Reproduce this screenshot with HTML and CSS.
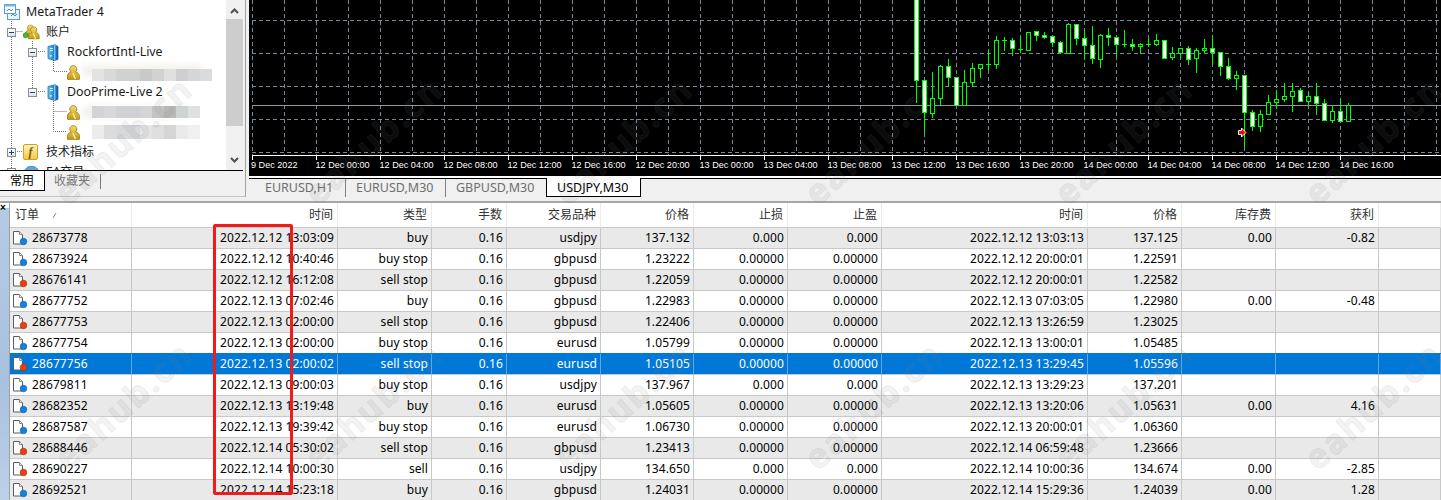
FILE: index.html
```html
<!DOCTYPE html>
<html lang="zh">
<head>
<meta charset="utf-8">
<title>MetaTrader 4</title>
<link rel="stylesheet" href="styles.css">
</head>
<body>
<svg class="defs" width="0" height="0" aria-hidden="true">
  <defs>
    <linearGradient id="gold" x1="0" y1="0" x2="0" y2="1"><stop offset="0" stop-color="#f6dc6a"/><stop offset="1" stop-color="#c79a12"/></linearGradient>
    <linearGradient id="tower" x1="0" y1="0" x2="1" y2="0"><stop offset="0" stop-color="#7cc8f4"/><stop offset=".5" stop-color="#1f8fe0"/><stop offset="1" stop-color="#0f5fae"/></linearGradient>
    <symbol id="doc-page" viewBox="0 0 16 16">
      <path d="M1.5 1.5h6l3 3v9.5h-9z" fill="#fff" stroke="#5c5c5c"/>
      <path d="M7.5 1.5v3h3" fill="#e8e8e8" stroke="#8a8a8a"/>
    </symbol>
    <symbol id="person" viewBox="0 0 14 16">
      <path d="M.6 15.400v-3.900c0-2.500 2.200-3.500 3.800-4C3.300 6.500 3 5.300 3 4.200 3 2.200 4.700.6 6.800.6s3.800 1.600 3.800 3.600c0 1.100-.4 2.300-1.400 3.300 1.600.5 4.200 1.500 4.200 4v3.900z" fill="url(#gold)" stroke="#8c6b06" stroke-width=".8"/>
      <path d="M6.500 8.500 9 15" stroke="#fff3b0" stroke-width="1.400" fill="none"/>
    </symbol>
    <symbol id="server" viewBox="0 0 12 17">
      <path d="M1 2.500 8 .8l3 1.700v12.800L8 16.500l-7-2z" fill="url(#tower)" stroke="#0f5c9e" stroke-width=".7"/>
      <path d="M7.800 1v15.400" stroke="#d7f0ff" stroke-width=".8"/>
      <path d="M3 4.500h3M3 6.500h3" stroke="#e6f6ff" stroke-width=".9"/>
      <rect x="3" y="11" width="1.600" height="1.600" fill="#ffe680"/>
    </symbol>
  </defs>
</svg>

<div class="top">
  <aside class="navigator">
    <div class="nav-body">
      <div class="tree">
        <svg class="connectors" width="226" height="170" viewBox="0 0 226 170" aria-hidden="true">
          <path d="M11.500 17V170M11.500 31.500H23M15 151.500H23M32.500 41V88M36 51.500H46M36 91.500H46M53.500 60V71.500H67M53.500 99V131.500H67M53.500 111.500H67" fill="none" stroke="#777" stroke-dasharray="1 1"/>
        </svg>
        <div class="tree-row root">
          <svg class="ico-app" viewBox="0 0 16 16" aria-hidden="true"><rect x="3.500" y="5.500" width="12" height="10" fill="#eaf4ff" stroke="#5b9ad6"/><rect x=".5" y=".5" width="11" height="9" fill="#fff" stroke="#5b9ad6"/><rect x=".5" y=".5" width="11" height="2" fill="#7db4e6"/><path d="M3 7 5 5l2 2 2-2M7 12l2-2 2 2 2-2" fill="none" stroke="#3f86c8"/></svg>
          <span class="label">MetaTrader 4</span>
        </div>
        <div class="tree-row lvl1">
          <span class="toggle minus"></span>
          <svg class="ico-accounts" viewBox="0 0 18 16" aria-hidden="true"><use href="#person" x="2" y="0" width="12" height="13"/><circle cx="2.800" cy="11.500" r="2.700" fill="#3fbf2f" stroke="#1f8a1a" stroke-width=".6"/><use href="#person" x="5" y="2" width="13" height="14"/></svg>
          <span class="label">账户</span>
        </div>
        <div class="tree-row lvl2">
          <span class="toggle minus"></span>
          <svg class="ico-server" aria-hidden="true"><use href="#server"/></svg>
          <span class="label">RockfortIntl-Live</span>
        </div>
        <div class="tree-row lvl3">
          <svg class="ico-person" aria-hidden="true"><use href="#person"/></svg>
          <span class="mosaic m1"></span>
        </div>
        <div class="tree-row lvl2">
          <span class="toggle minus"></span>
          <svg class="ico-server" aria-hidden="true"><use href="#server"/></svg>
          <span class="label">DooPrime-Live 2</span>
        </div>
        <div class="tree-row lvl3">
          <svg class="ico-person" aria-hidden="true"><use href="#person"/></svg>
          <span class="mosaic m2"></span>
        </div>
        <div class="tree-row lvl3">
          <svg class="ico-person" aria-hidden="true"><use href="#person"/></svg>
          <span class="mosaic m3"></span>
        </div>
        <div class="tree-row lvl1">
          <span class="toggle plus"></span>
          <span class="ico-func">f</span>
          <span class="label">技术指标</span>
        </div>
        <div class="tree-row lvl1">
          <span class="toggle plus"></span>
          <svg class="ico-accounts" viewBox="0 0 18 16" aria-hidden="true"><path d="M1 9c1-5 4-7 8-7s7 2 8 7c-2 3-14 3-16 0z" fill="#5aa7dc" stroke="#2b77b2" stroke-width=".7"/></svg>
          <span class="label">EA交易</span>
        </div>
      </div>
      <div class="scrollbar">
        <svg class="sb-btn" viewBox="0 0 17 19" aria-hidden="true"><path d="M5 13l3.500-3.500L12 13" fill="none" stroke="#505050" stroke-width="2"/></svg>
        <div class="sb-thumb"></div>
        <div class="sb-track"></div>
        <svg class="sb-btn" viewBox="0 0 17 19" aria-hidden="true"><path d="M5 7l3.500 3.500L12 7" fill="none" stroke="#505050" stroke-width="2"/></svg>
      </div>
    </div>
    <div class="nav-tabs">
      <span class="nav-tab active">常用</span>
      <span class="nav-tab">收藏夹</span>
    </div>
  </aside>

  <section class="workspace">
    <svg class="chart" width="1192" height="176" viewBox="249 0 1192 176" role="img" aria-label="USDJPY,M30">
      <defs>
        <pattern id="vgrid" x="252" y="0" width="32" height="176" patternUnits="userSpaceOnUse">
          <line x1=".5" y1="0" x2=".5" y2="155" stroke="#778899" stroke-dasharray="4 3"/>
        </pattern>
        <pattern id="ticks" x="252" y="155" width="64" height="6" patternUnits="userSpaceOnUse">
          <line x1=".5" y1="0" x2=".5" y2="5" stroke="#fff"/>
        </pattern>
      </defs>
      <rect x="249" y="0" width="1192" height="176" fill="#000"/>
      <rect x="252" y="0" width="1189" height="155" fill="url(#vgrid)"/>
      <path d="M252 20.500H1441M252 53.500H1441M252 86.500H1441M252 119.500H1441M252 152.500H1441" stroke="#778899" stroke-dasharray="4 3"/>
      <path d="M252 105.500H1441" stroke="#8f98a3"/>
      <path d="M252 155.500H1441" stroke="#fff"/>
      <rect x="252" y="155" width="1189" height="6" fill="url(#ticks)"/>

      <path class="wicks" d="M916.500 0V103M924.500 80V133M932.500 72V118M940.500 65V105M948.500 59V87M956.500 77V105M964.500 70V105M972.500 63V87M980.500 64V78M988.500 50V70M996.500 36V69M1004.500 37V51M1012.500 38V56M1020.500 37V53M1028.500 32V50M1036.500 31V41M1044.500 32V39M1052.500 35V47M1060.500 41V53M1068.500 23V53M1076.500 24V45M1084.500 30V59M1092.500 26V64M1100.500 34V68M1108.500 28V46M1116.500 37V57M1124.500 30V47M1132.500 39V51M1140.500 43V54M1148.500 38V47M1156.500 34V46M1164.500 40V59M1172.500 47V60M1180.500 48V60M1188.500 46V65M1196.500 48V73M1204.500 39V53M1212.500 35V65M1220.500 52V76M1228.500 58V80M1236.500 71V90M1244.500 75V148M1252.500 110V131M1260.500 110V132M1268.500 95V115M1276.500 90V108M1284.500 83V102M1292.500 83V112M1300.500 88V102M1308.500 92V107M1316.500 83V115M1324.500 99V121M1332.500 106V123M1340.500 99V122M1348.500 103V122"/>
      <path class="wicks" d="M986 64.500h5M1002 40.500h5M1018 49.500h5M1122 44.500h5M1146 44.500h5"/>
      <g class="bear">
        <rect x="914.500" y="-1" width="4" height="81.500"/><rect x="922.500" y="80.500" width="4" height="32"/><rect x="946.500" y="66.500" width="4" height="11"/><rect x="954.500" y="77.500" width="4" height="28"/><rect x="1010.500" y="40.500" width="4" height="8"/><rect x="1034.500" y="31.500" width="4" height="4"/><rect x="1042.500" y="35.500" width="4" height="2"/><rect x="1050.500" y="36.500" width="4" height="6"/><rect x="1058.500" y="42.500" width="4" height="10"/><rect x="1074.500" y="24.500" width="4" height="14"/><rect x="1082.500" y="38.500" width="4" height="7"/><rect x="1090.500" y="45.500" width="4" height="13"/><rect x="1106.500" y="35.500" width="4" height="2"/><rect x="1114.500" y="37.500" width="4" height="7"/><rect x="1130.500" y="44.500" width="4" height="2"/><rect x="1162.500" y="40.500" width="4" height="18"/><rect x="1186.500" y="48.500" width="4" height="11"/><rect x="1210.500" y="48.500" width="4" height="4"/><rect x="1218.500" y="52.500" width="4" height="14"/><rect x="1226.500" y="66.500" width="4" height="12"/><rect x="1242.500" y="75.500" width="4" height="37"/><rect x="1250.500" y="112.500" width="4" height="14"/><rect x="1298.500" y="90.500" width="4" height="11"/><rect x="1314.500" y="96.500" width="4" height="7"/><rect x="1322.500" y="103.500" width="4" height="17"/><rect x="1338.500" y="111.500" width="4" height="10"/>
      </g>
      <g class="bull">
        <rect x="930.500" y="98.500" width="4" height="15"/><rect x="938.500" y="66.500" width="4" height="32"/><rect x="962.500" y="82.500" width="4" height="23"/><rect x="970.500" y="68.500" width="4" height="14"/><rect x="978.500" y="64.500" width="4" height="4"/><rect x="994.500" y="40.500" width="4" height="24"/><rect x="1026.500" y="32.500" width="4" height="18"/><rect x="1066.500" y="24.500" width="4" height="29"/><rect x="1098.500" y="35.500" width="4" height="24"/><rect x="1138.500" y="44.500" width="4" height="2"/><rect x="1154.500" y="40.500" width="4" height="4"/><rect x="1170.500" y="53.500" width="4" height="4"/><rect x="1178.500" y="48.500" width="4" height="5"/><rect x="1194.500" y="50.500" width="4" height="8"/><rect x="1202.500" y="48.500" width="4" height="2"/><rect x="1234.500" y="75.500" width="4" height="3"/><rect x="1258.500" y="114.500" width="4" height="12"/><rect x="1266.500" y="102.500" width="4" height="12"/><rect x="1274.500" y="99.500" width="4" height="3"/><rect x="1282.500" y="96.500" width="4" height="3"/><rect x="1290.500" y="91.500" width="4" height="5"/><rect x="1306.500" y="96.500" width="4" height="5"/><rect x="1330.500" y="111.500" width="4" height="9"/><rect x="1346.500" y="105.500" width="4" height="16"/>
      </g>
      <path d="M1238.500 130.500h3v-2.500l4.500 4.500-4.500 4.500v-2.500h-3z" fill="#f00" stroke="#fff"/>

      <g class="axis-labels">
        <text x="251" y="167.500">9 Dec 2022</text>
        <text x="315.500" y="167.500">12 Dec 00:00</text>
        <text x="379.500" y="167.500">12 Dec 04:00</text>
        <text x="443.500" y="167.500">12 Dec 08:00</text>
        <text x="507.500" y="167.500">12 Dec 12:00</text>
        <text x="571.500" y="167.500">12 Dec 16:00</text>
        <text x="635.500" y="167.500">12 Dec 20:00</text>
        <text x="699.500" y="167.500">13 Dec 00:00</text>
        <text x="763.500" y="167.500">13 Dec 04:00</text>
        <text x="827.500" y="167.500">13 Dec 08:00</text>
        <text x="891.500" y="167.500">13 Dec 12:00</text>
        <text x="955.500" y="167.500">13 Dec 16:00</text>
        <text x="1019.500" y="167.500">13 Dec 20:00</text>
        <text x="1083.500" y="167.500">14 Dec 00:00</text>
        <text x="1147.500" y="167.500">14 Dec 04:00</text>
        <text x="1211.500" y="167.500">14 Dec 08:00</text>
        <text x="1275.500" y="167.500">14 Dec 12:00</text>
        <text x="1339.500" y="167.500">14 Dec 16:00</text>
      </g>
    </svg>
    <div class="chart-tabs">
      <span class="chart-tab t1">EURUSD,H1</span>
      <span class="chart-tab t2">EURUSD,M30</span>
      <span class="chart-tab t3">GBPUSD,M30</span>
      <span class="chart-tab active">USDJPY,M30</span>
    </div>
  </section>
</div>

<div class="orders">
  <div class="dock"><span class="dock-close">×</span></div>
  <table class="order-table">
    <colgroup>
      <col class="c-order"><col class="c-time"><col class="c-type"><col class="c-lots"><col class="c-std"><col class="c-std2"><col class="c-std"><col class="c-std"><col class="c-time"><col class="c-std"><col class="c-std"><col class="c-profit"><col class="c-rest">
    </colgroup>
    <thead>
      <tr>
        <th class="first">订单<svg class="sort" viewBox="0 0 6 8" aria-hidden="true"><path d="M1 7 4 2" stroke="#888" fill="none"/></svg></th>
        <th>时间</th><th>类型</th><th>手数</th><th>交易品种</th><th>价格</th><th>止损</th><th>止盈</th><th>时间</th><th>价格</th><th>库存费</th><th>获利</th><th></th>
      </tr>
    </thead>
    <tbody>
      <tr class="alt"><td class="first"><svg class="order-ico buy" aria-hidden="true"><use href="#doc-page"/><circle cx="11.500" cy="11.500" r="3.300"/></svg>28673778</td><td>2022.12.12 13:03:09</td><td>buy</td><td>0.16</td><td>usdjpy</td><td>137.132</td><td>0.000</td><td>0.000</td><td>2022.12.12 13:03:13</td><td>137.125</td><td>0.00</td><td>-0.82</td><td></td></tr>
      <tr><td class="first"><svg class="order-ico buy" aria-hidden="true"><use href="#doc-page"/><circle cx="11.500" cy="11.500" r="3.300"/></svg>28673924</td><td>2022.12.12 10:40:46</td><td>buy stop</td><td>0.16</td><td>gbpusd</td><td>1.23222</td><td>0.00000</td><td>0.00000</td><td>2022.12.12 20:00:01</td><td>1.22591</td><td></td><td></td><td></td></tr>
      <tr class="alt"><td class="first"><svg class="order-ico sell" aria-hidden="true"><use href="#doc-page"/><circle cx="11.500" cy="11.500" r="3.300"/></svg>28676141</td><td>2022.12.12 16:12:08</td><td>sell stop</td><td>0.16</td><td>gbpusd</td><td>1.22059</td><td>0.00000</td><td>0.00000</td><td>2022.12.12 20:00:01</td><td>1.22582</td><td></td><td></td><td></td></tr>
      <tr><td class="first"><svg class="order-ico buy" aria-hidden="true"><use href="#doc-page"/><circle cx="11.500" cy="11.500" r="3.300"/></svg>28677752</td><td>2022.12.13 07:02:46</td><td>buy</td><td>0.16</td><td>gbpusd</td><td>1.22983</td><td>0.00000</td><td>0.00000</td><td>2022.12.13 07:03:05</td><td>1.22980</td><td>0.00</td><td>-0.48</td><td></td></tr>
      <tr class="alt"><td class="first"><svg class="order-ico sell" aria-hidden="true"><use href="#doc-page"/><circle cx="11.500" cy="11.500" r="3.300"/></svg>28677753</td><td>2022.12.13 02:00:00</td><td>sell stop</td><td>0.16</td><td>gbpusd</td><td>1.22406</td><td>0.00000</td><td>0.00000</td><td>2022.12.13 13:26:59</td><td>1.23025</td><td></td><td></td><td></td></tr>
      <tr><td class="first"><svg class="order-ico buy" aria-hidden="true"><use href="#doc-page"/><circle cx="11.500" cy="11.500" r="3.300"/></svg>28677754</td><td>2022.12.13 02:00:00</td><td>buy stop</td><td>0.16</td><td>eurusd</td><td>1.05799</td><td>0.00000</td><td>0.00000</td><td>2022.12.13 13:00:01</td><td>1.05485</td><td></td><td></td><td></td></tr>
      <tr class="selected"><td class="first"><svg class="order-ico sell" aria-hidden="true"><use href="#doc-page"/><circle cx="11.500" cy="11.500" r="3.300"/></svg>28677756</td><td>2022.12.13 02:00:02</td><td>sell stop</td><td>0.16</td><td>eurusd</td><td>1.05105</td><td>0.00000</td><td>0.00000</td><td>2022.12.13 13:29:45</td><td>1.05596</td><td></td><td></td><td></td></tr>
      <tr><td class="first"><svg class="order-ico buy" aria-hidden="true"><use href="#doc-page"/><circle cx="11.500" cy="11.500" r="3.300"/></svg>28679811</td><td>2022.12.13 09:00:03</td><td>buy stop</td><td>0.16</td><td>usdjpy</td><td>137.967</td><td>0.000</td><td>0.000</td><td>2022.12.13 13:29:23</td><td>137.201</td><td></td><td></td><td></td></tr>
      <tr class="alt"><td class="first"><svg class="order-ico buy" aria-hidden="true"><use href="#doc-page"/><circle cx="11.500" cy="11.500" r="3.300"/></svg>28682352</td><td>2022.12.13 13:19:48</td><td>buy</td><td>0.16</td><td>eurusd</td><td>1.05605</td><td>0.00000</td><td>0.00000</td><td>2022.12.13 13:20:06</td><td>1.05631</td><td>0.00</td><td>4.16</td><td></td></tr>
      <tr><td class="first"><svg class="order-ico buy" aria-hidden="true"><use href="#doc-page"/><circle cx="11.500" cy="11.500" r="3.300"/></svg>28687587</td><td>2022.12.13 19:39:42</td><td>buy stop</td><td>0.16</td><td>eurusd</td><td>1.06730</td><td>0.00000</td><td>0.00000</td><td>2022.12.13 20:00:01</td><td>1.06360</td><td></td><td></td><td></td></tr>
      <tr class="alt"><td class="first"><svg class="order-ico sell" aria-hidden="true"><use href="#doc-page"/><circle cx="11.500" cy="11.500" r="3.300"/></svg>28688446</td><td>2022.12.14 05:30:02</td><td>sell stop</td><td>0.16</td><td>gbpusd</td><td>1.23413</td><td>0.00000</td><td>0.00000</td><td>2022.12.14 06:59:48</td><td>1.23666</td><td></td><td></td><td></td></tr>
      <tr><td class="first"><svg class="order-ico sell" aria-hidden="true"><use href="#doc-page"/><circle cx="11.500" cy="11.500" r="3.300"/></svg>28690227</td><td>2022.12.14 10:00:30</td><td>sell</td><td>0.16</td><td>usdjpy</td><td>134.650</td><td>0.000</td><td>0.000</td><td>2022.12.14 10:00:36</td><td>134.674</td><td>0.00</td><td>-2.85</td><td></td></tr>
      <tr class="alt"><td class="first"><svg class="order-ico buy" aria-hidden="true"><use href="#doc-page"/><circle cx="11.500" cy="11.500" r="3.300"/></svg>28692521</td><td>2022.12.14 15:23:18</td><td>buy</td><td>0.16</td><td>gbpusd</td><td>1.24031</td><td>0.00000</td><td>0.00000</td><td>2022.12.14 15:29:36</td><td>1.24039</td><td>0.00</td><td>1.28</td><td></td></tr>
    </tbody>
  </table>
</div>

<div class="highlight-box"></div>
<div class="watermarks" aria-hidden="true">
  <span>eahub.cn</span><span>eahub.cn</span><span>eahub.cn</span><span>eahub.cn</span><span>eahub.cn</span><span>eahub.cn</span>
  <span>eahub.cn</span><span>eahub.cn</span><span>eahub.cn</span><span>eahub.cn</span><span>eahub.cn</span><span>eahub.cn</span>
</div>
</body>
</html>
```

FILE: styles.css
```css
* { box-sizing: border-box; }

html, body {
  margin: 0;
  height: 500px;
  overflow: hidden;
}

body {
  position: relative;
  background: #fff;
  color: #000;
  font: 12px/16px "Noto Sans", "Noto Sans CJK SC", sans-serif;
}

.defs { position: absolute; }

/* top block */
.top {
  display: flex;
  height: 203px;
  background: #f0f0f0;
  border-bottom: 2px solid #a6a6a6;
}

.navigator {
  width: 246px;
  height: 197px;
  flex: none;
  border-right: 1px solid #a0a0a0;
  border-bottom: 1px solid #c4c4c4;
  display: flex;
  flex-direction: column;
}

.nav-body {
  display: flex;
  height: 170px;
  flex: none;
}

.tree {
  position: relative;
  width: 226px;
  height: 170px;
  padding-top: 2px;
  background: #fff;
  overflow: hidden;
  font-size: 12.400px;
}

.connectors { position: absolute; left: 0; top: 0; }

.tree-row {
  position: relative;
  display: flex;
  align-items: center;
  height: 20px;
  white-space: nowrap;
}

.root { padding-left: 4px; }
.lvl1 { padding-left: 7px; }
.lvl2 { padding-left: 28px; }
.lvl3 { padding-left: 68px; }

.label { color: #1a1a1a; }
.root .label { margin-left: 6px; }
.lvl1 .label { margin-left: 6px; font-size: 12px; }
.lvl2 .label { margin-left: 8px; }

.toggle {
  position: relative;
  width: 9px;
  height: 9px;
  flex: none;
  margin-right: 7px;
  border: 1px solid #8c8c8c;
  background: linear-gradient(#fff, #dfe3ea);
}
.toggle::before {
  content: "";
  position: absolute;
  left: 1px;
  top: 3px;
  width: 5px;
  height: 1px;
  background: #1c3f94;
}
.plus::after {
  content: "";
  position: absolute;
  left: 3px;
  top: 1px;
  width: 1px;
  height: 5px;
  background: #1c3f94;
}

.ico-app { width: 16px; height: 16px; flex: none; }
.ico-accounts { width: 17px; height: 16px; flex: none; }
.ico-server { width: 12px; height: 17px; flex: none; margin-left: 3px; }
.ico-person { width: 13px; height: 15px; flex: none; margin-left: -1px; }

.ico-func {
  width: 15px;
  height: 16px;
  flex: none;
  margin-right: 2px;
  border: 1px solid #c9a227;
  border-radius: 2px;
  background: linear-gradient(#fff3b8, #f0c94a);
  color: #7c5a00;
  font: italic 700 12px/14px "Liberation Serif", serif;
  text-align: center;
}

.mosaic { display: block; flex: none; }
.m1 {
  width: 120px;
  height: 12px;
  margin-left: 12px;
  margin-top: 5px;
  background: linear-gradient(90deg, #e3e3e3 0 12px, #d9d9d9 12px 24px, #d0d2d2 24px 48px, #c9c9c9 48px 60px, #d2d2d2 60px 72px, #dfe0df 72px 84px, #cfcfcf 84px 96px, #d4d6d8 96px 108px, #d9dbdc 108px 120px);
  box-shadow: -10px -4px 6px #f4f2ee;
}
.m2 {
  width: 108px;
  height: 12px;
  margin-left: 12px;
  background: linear-gradient(90deg, #d0d4d8 0 12px, #d8d8d8 12px 24px, #cfd2d4 24px 48px, #d4d4d4 48px 60px, #c1c3c4 60px 72px, #b9b8b5 72px 84px, #cfd3d4 84px 96px, #dde1e1 96px 108px);
  box-shadow: -10px 0 6px #f5f1ec;
}
.m3 {
  width: 108px;
  height: 14px;
  margin-left: 12px;
  background: linear-gradient(90deg, #ececec 0 12px, #dcdcdc 12px 24px, #d6d8dc 24px 48px, #e4e4e4 48px 60px, #dedede 60px 72px, #d5d5d5 72px 84px, #eaeaea 84px 96px, #f0f0f0 96px 108px);
}

.scrollbar {
  width: 17px;
  height: 170px;
  flex: none;
  display: flex;
  flex-direction: column;
  background: #f0f0f0;
}
.sb-btn { display: block; width: 17px; height: 19px; flex: none; }
.sb-thumb { height: 107px; flex: none; background: #cdcdcd; }
.sb-track { flex: 1; }

.nav-tabs {
  display: flex;
  width: 243px;
  height: 21px;
  flex: none;
  border-top: 1px solid #000;
  color: #777;
}
.nav-tab { padding: 2px 10px 0 10px; }
.nav-tab.active {
  width: 45px;
  height: 20px;
  background: #fff;
  color: #000;
  border-right: 1px solid #000;
  border-bottom: 1px solid #000;
}
.nav-tab:not(.active) {
  position: relative;
  width: 56px;
  padding-left: 9px;
}
.nav-tab:not(.active)::after {
  content: "";
  position: absolute;
  right: 0;
  top: 3px;
  width: 1px;
  height: 15px;
  background: #777;
}

.workspace {
  width: 1192px;
  margin-left: 3px;
  flex: none;
  display: flex;
  flex-direction: column;
}

.chart {
  display: block;
  flex: none;
  font-family: "Liberation Sans", sans-serif;
}
.wicks { fill: none; stroke: #0f0; stroke-width: 1; }
.bear rect { fill: #fff; stroke: #0f0; stroke-width: 1; }
.bull rect { fill: #000; stroke: #0f0; stroke-width: 1; }
.axis-labels text { fill: #fff; font-size: 9.100px; }

.chart-tabs {
  display: flex;
  height: 21px;
  margin-top: 2px;
  border-top: 1px solid #000;
  color: #6e6e6e;
  font-size: 12.500px;
  line-height: 18px;
  box-shadow: 0 -2px 0 #fff;
}
.chart-tab { height: 18px; white-space: nowrap; }
.t1 { width: 97px; padding-left: 16px; border-right: 1px solid #808080; }
.t2 { width: 100px; padding-left: 10px; border-right: 1px solid #808080; }
.t3 { width: 100px; padding-left: 10px; }
.chart-tab.active {
  width: 95px;
  height: 19px;
  margin-top: -1px;
  padding-left: 10px;
  padding-top: 1px;
  background: #fff;
  color: #000;
  border-left: 1px solid #000;
  border-right: 1px solid #000;
  border-bottom: 1px solid #000;
}

/* orders */
.orders { display: flex; height: 297px; overflow: hidden; }

.dock {
  width: 10px;
  flex: none;
  border-right: 1px solid #a0a0a0;
  background: linear-gradient(#fff 0 5px, #b4cbe6 5px, #a8c1df 60%, #bcd0e8);
}
.dock-close {
  display: block;
  font: 700 10px/9px "Liberation Sans", sans-serif;
  color: #000;
}

.order-table {
  width: 1431px;
  height: 298px;
  flex: none;
  table-layout: fixed;
  border-collapse: separate;
  border-spacing: 0;
}

.c-order { width: 122px; }
.c-time { width: 206px; }
.c-type { width: 94px; }
.c-lots { width: 75px; }
.c-std { width: 94px; }
.c-std2 { width: 93px; }
.c-profit { width: 103px; }
.c-rest { width: 62px; }

.order-table th {
  height: 25px;
  padding: 0 4px 1px 0;
  font-weight: 400;
  color: #333;
  text-align: right;
  background: #fff;
  border-right: 1px solid #ececec;
  border-bottom: 1px solid #c8c8c8;
}
.order-table th.first { text-align: left; padding-left: 5px; }
.sort { display: inline-block; width: 6px; height: 8px; margin-left: 13px; }

.order-table td {
  height: 21px;
  padding: 0 3px 0 0;
  text-align: right;
  white-space: nowrap;
  letter-spacing: .1px;
  border-right: 1px solid #c8c8c8;
  border-bottom: 1px solid #c8c8c8;
}
.order-table td.first { text-align: left; padding-left: 2px; }
.order-table tr.alt td { background: #e9e9e9; }
.order-table tr.selected td {
  background: #0078d7;
  color: #fff;
  border-right-color: #5fa8e3;
  box-shadow: 0 -1px 0 #0078d7;
}

.order-ico {
  width: 16px;
  height: 16px;
  margin-right: 4px;
  vertical-align: -4px;
}
.order-ico.buy circle { fill: #1282dc; stroke: #0b5ea6; stroke-width: .6; }
.order-ico.sell circle { fill: #ea3f10; stroke: #a82a08; stroke-width: .6; }

/* overlays */
.highlight-box {
  position: absolute;
  left: 213px;
  top: 224px;
  width: 80px;
  height: 271px;
  border: 3px solid #f01c1c;
  border-radius: 2px;
}

.watermarks {
  position: absolute;
  left: -2px;
  top: 0;
  width: 1443px;
  height: 500px;
  padding-top: 7px;
  overflow: hidden;
  display: grid;
  grid-template-columns: repeat(6, 250px);
  grid-auto-rows: 265px;
  pointer-events: none;
}
.watermarks span {
  place-self: center;
  transform: rotate(-42deg);
  color: rgba(128, 128, 128, .09);
  -webkit-text-stroke: 1px rgba(128, 128, 128, .12);
  font: 700 34px/40px "Noto Sans", sans-serif;
  letter-spacing: 2px;
}
```
